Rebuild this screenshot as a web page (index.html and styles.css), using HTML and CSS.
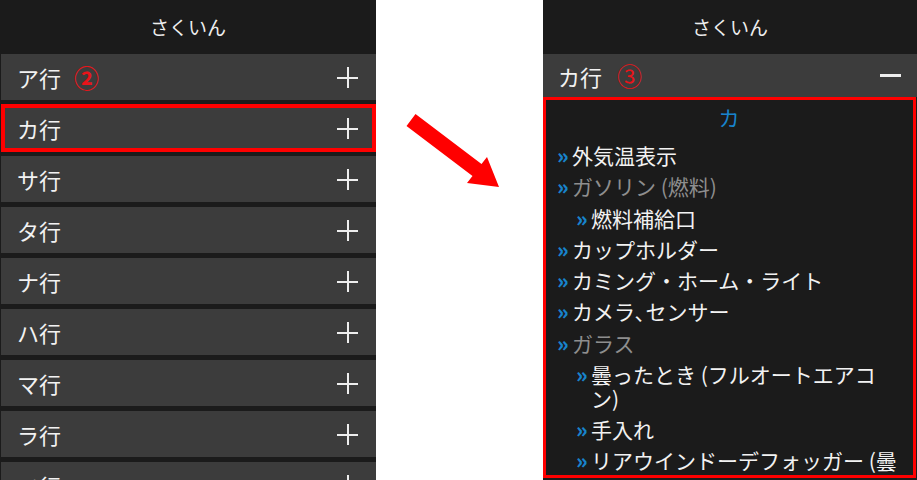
FILE: index.html
```
<!DOCTYPE html>
<html>
<head>
  <title>さくいん</title>
  <link rel="stylesheet" href="styles.css">
</head>
<body>
  <div class="screen">
    <div class="title">さくいん</div>
    <div class="row"><span class="label">ア行<span class="step bold">②</span></span><span class="plus"></span></div>
    <div class="row marked"><span class="label">カ行</span><span class="plus"></span></div>
    <div class="row"><span class="label">サ行</span><span class="plus"></span></div>
    <div class="row"><span class="label">タ行</span><span class="plus"></span></div>
    <div class="row"><span class="label">ナ行</span><span class="plus"></span></div>
    <div class="row"><span class="label">ハ行</span><span class="plus"></span></div>
    <div class="row"><span class="label">マ行</span><span class="plus"></span></div>
    <div class="row"><span class="label">ラ行</span><span class="plus"></span></div>
    <div class="row"><span class="label">ワ行</span><span class="plus"></span></div>
  </div>

  <div class="middle">
    <svg width="167" height="480" viewBox="0 0 167 480">
      <polygon fill="#ff0000" points="39.5,114 105.5,164 111,157 123,187 91,183 96.5,176 30.5,126"/>
    </svg>
  </div>

  <div class="screen right">
    <div class="title">さくいん</div>
    <div class="row open"><span class="label">カ行<span class="step">③</span></span><span class="minus"></span></div>
    <div class="index">
      <div class="kana">カ</div>
      <ul class="entries">
        <li>外気温表示</li>
        <li class="group">ガソリン (燃料)</li>
        <li class="sub">燃料補給口</li>
        <li>カップホルダー</li>
        <li>カミング・ホーム・ライト</li>
        <li>カメラ､センサー</li>
        <li class="group">ガラス</li>
        <li class="sub">曇ったとき (フルオートエアコン)</li>
        <li class="sub">手入れ</li>
        <li class="sub">リアウインドーデフォッガー (曇り取り)スイッチ</li>
      </ul>
    </div>
  </div>
</body>
</html>
```

FILE: styles.css
```
body {
  margin: 0;
  background-color: #ffffff;
  font-family: "Noto Sans CJK JP", "Noto Sans", sans-serif;
  display: flex;
  height: 480px;
  overflow: hidden;
}

.screen {
  width: 376px;
  height: 480px;
  background-color: #1b1b1b;
  overflow: hidden;
  flex: none;
}

.screen.right {
  width: 374px;
}

.middle {
  width: 167px;
  flex: none;
}

.middle svg {
  display: block;
}

.title {
  height: 54px;
  line-height: 54px;
  text-align: center;
  color: #eeeeee;
  font-size: 19px;
}

.row {
  position: relative;
  height: 46px;
  margin: 0 0 5px 1px;
  padding: 0 18px 0 16px;
  background-color: #3c3c3c;
  display: flex;
  align-items: center;
  justify-content: space-between;
  color: #f2f2f2;
  font-size: 22px;
}

.row.marked::after {
  content: "";
  position: absolute;
  top: -1px;
  bottom: -1px;
  left: 0;
  right: 0;
  border: 4px solid #ff0000;
}

.row.open {
  height: 43px;
  margin: 0;
  padding: 0 16px 0 15px;
}

.label {
  display: flex;
  align-items: center;
  line-height: 1;
}

.step {
  color: #e8141a;
  font-size: 25px;
  margin-left: 15px;
}

.step.bold {
  font-weight: bold;
  margin-left: 13px;
}

.plus {
  position: relative;
  width: 21px;
  height: 21px;
}

.plus::before,
.plus::after {
  content: "";
  position: absolute;
  background-color: #eeeeee;
}

.plus::before {
  left: 0;
  right: 0;
  top: 10px;
  height: 2px;
}

.plus::after {
  top: 0;
  bottom: 0;
  left: 10px;
  width: 2px;
}

.minus {
  width: 21px;
  height: 3px;
  background-color: #eeeeee;
}

.index {
  height: 381px;
  margin-right: 1px;
  border: 3px solid #ff0000;
  box-sizing: border-box;
  padding: 2px 12px 0 11px;
  overflow: hidden;
}

.kana {
  text-align: center;
  color: #1883cc;
  font-size: 21px;
  line-height: 30px;
}

.entries {
  list-style: none;
  margin: 11px 0 0;
  padding: 0;
}

.entries li {
  display: flex;
  color: #f2f2f2;
  font-size: 21px;
  line-height: 24px;
  margin-bottom: 7.25px;
}

.entries li::before {
  content: "»";
  flex: 0 0 15px;
  color: #1883cc;
  font-weight: 900;
  font-size: 21px;
  line-height: 24px;
}

.entries li.group {
  color: #8e8e8e;
}

.entries li.sub {
  padding-left: 19px;
}
```
